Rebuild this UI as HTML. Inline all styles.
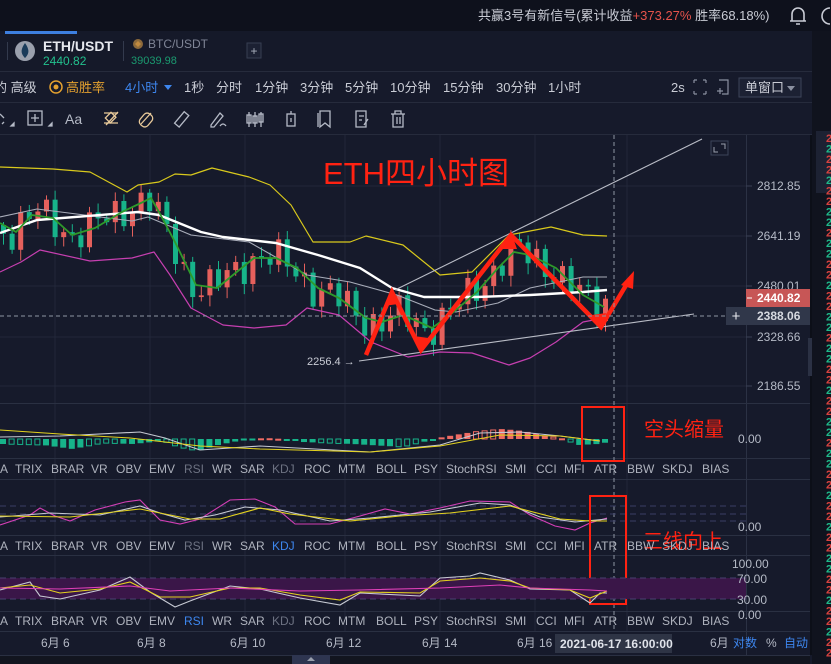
<!DOCTYPE html>
<html><head><meta charset="utf-8">
<style>
html,body{margin:0;padding:0;background:#161a2b;}
body{width:831px;height:664px;overflow:hidden;position:relative;font-family:"Liberation Sans","Noto Sans CJK SC",sans-serif;}
svg{position:absolute;left:0;top:0;}
text{font-family:"Liberation Sans","Noto Sans CJK SC",sans-serif;}
</style></head><body>
<svg id="s" width="831" height="664" viewBox="0 0 831 664" xmlns="http://www.w3.org/2000/svg">
<rect x="0" y="0" width="831" height="664" fill="#161a2b"/>
<rect x="0" y="0" width="831" height="31" fill="#0e111c"/>
<rect x="0" y="31" width="812" height="40" fill="#151929"/>
<rect x="0" y="71" width="812" height="1" fill="#262b3c"/>
<rect x="0" y="102" width="812" height="1" fill="#262b3c"/>
<rect x="0" y="134" width="812" height="1" fill="#262b3c"/>
<rect x="5" y="31" width="72" height="3" fill="#3d7fe0"/>
<rect x="812" y="31" width="19" height="633" fill="#10131e"/>
<rect x="816" y="131" width="15" height="62" fill="#1d2233"/>
<text x="478" y="20" font-size="13" fill="#c9ccd5">共赢3号有新信号(累计收益<tspan fill="#e5534b">+373.27%</tspan> 胜率68.18%)</text>
<g fill="none" stroke="#c9ccd5" stroke-width="1.6"><path d="M792 21 V14 a6 6 0 0 1 12 0 V21 Z M790 21 H806 M796 24 H800"/><path d="M830 8 a8 8 0 0 0 0 16"/></g>
<rect x="7" y="42" width="1" height="18" fill="#333a4d"/>
<circle cx="25" cy="51" r="10" fill="#9aa0ad"/><path d="M25 43 C21 49 20 53 25 58 C30 53 29 49 25 43Z" fill="#1a3b5a"/>
<text x="43" y="51" font-size="14" font-weight="bold" fill="#e6e8ee">ETH/USDT</text>
<text x="43" y="65" font-size="12" fill="#22c08d">2440.82</text>
<rect x="123" y="41" width="1" height="20" fill="#333a4d"/>
<circle cx="138" cy="44" r="5" fill="#8d6a3b"/><path d="M138 41 L141 44 L138 47 L135 44Z" fill="#c08a40"/>
<text x="148" y="48" font-size="12" fill="#7f8596">BTC/USDT</text>
<text x="131" y="64" font-size="11" fill="#1b9a70">39039.98</text>
<rect x="247" y="43" width="14" height="15" fill="#1c2133" stroke="#373e52"/>
<text x="254" y="55" font-size="12" fill="#aab0bd" text-anchor="middle">+</text>
<g font-size="13" fill="#c9ccd5">
<text x="-6" y="92">的 高级</text>
<circle cx="56" cy="87" r="6" fill="none" stroke="#e3a02f" stroke-width="1.5"/><circle cx="56" cy="87" r="2.5" fill="#e3a02f"/>
<text x="66" y="92" fill="#e3a02f">高胜率</text>
<text x="125" y="92" fill="#3d86ee">4小时</text>
<path d="M164 85 L172 85 L168 90Z" fill="#3d86ee"/>
<text x="184" y="92">1秒</text><text x="216" y="92">分时</text><text x="255" y="92">1分钟</text>
<text x="300" y="92">3分钟</text><text x="345" y="92">5分钟</text><text x="390" y="92">10分钟</text>
<text x="443" y="92">15分钟</text><text x="496" y="92">30分钟</text><text x="548" y="92">1小时</text>
<text x="671" y="92">2s</text>
</g>
<g fill="none" stroke="#8a90a0" stroke-width="1.2"><path d="M694 80h3M694 80v3M706 80h-3M706 80v3M694 94h3M694 94v-3M706 94h-3M706 94v-3"/><path d="M719 80h9v14h-6M720 88v6M717 91h6"/></g>
<rect x="739" y="78" width="62" height="19" fill="#1c2133" stroke="#3c4459"/>
<text x="745" y="92" font-size="13" fill="#c9ccd5">单窗口</text><path d="M787 86 L795 86 L791 91Z" fill="#8a90a0"/>
<g fill="none" stroke="#b5bac6" stroke-width="1.3">
<path d="M0 114 l4 4 M2 124 l2 -2"/>
<rect x="28" y="111" width="14" height="14"/><path d="M35 114v8M31 118h8"/><path d="M49 126 l3 -3 v3z" fill="#b5bac6"/>
<path d="M11 126 l3 -3 v3z" fill="#b5bac6"/>
<path d="M104 113l14 0 M104 123l14 0" stroke="#e8c99a"/><path d="M106 125 L118 112" stroke="#e8c99a"/><rect x="107" y="114" width="8" height="7" stroke="#e8c99a" transform="rotate(-45 111 118)"/>
<rect x="141" y="113" width="10" height="14" rx="4" transform="rotate(40 146 120)" stroke="#e8c99a"/><path d="M141 124 L151 113" stroke="#e8c99a"/>
<rect x="179" y="112" width="6" height="15" transform="rotate(40 182 119)"/>
<path d="M211 125 L220 113 L223 116 L214 127 L211 127Z M220 126 q3 -4 6 0"/>
<path d="M249 112v15M255 112v15M261 112v15"/><rect x="247" y="115" width="4" height="8"/><rect x="253" y="116" width="4" height="7"/><rect x="259" y="114" width="4" height="8"/>
<rect x="287" y="114" width="8" height="12"/><path d="M291 111v3M291 118v4"/>
<path d="M320 111h10v16l-5-4-5 4z"/><path d="M318 113v14"/>
<path d="M356 111h10v16h-10zM359 116h5M359 120h3M364 125l4-6"/>
<path d="M391 114h14M395 114v-3h6v3M393 114v13h10v-13M397 117v7M400 117v7"/>
</g>
<text x="65" y="124" font-size="14" fill="#b5bac6">Aa</text>
<g stroke="#22273a" stroke-width="1">
<path d="M55 135V632M150 135V632M245 135V632M345 135V632M440 135V632M535 135V632M627 135V632"/>
<path d="M0 186H746M0 236H746M0 286H746M0 337H746M0 386H746"/>
</g>
<rect x="746" y="135" width="1" height="520" fill="#2b3144"/>
<rect x="810" y="135" width="2" height="520" fill="#0c0f18"/>
<g fill="#2a3042"><rect x="0" y="403" width="810" height="1"/><rect x="0" y="458" width="810" height="1"/><rect x="0" y="479" width="810" height="1"/><rect x="0" y="535" width="810" height="1"/><rect x="0" y="555" width="810" height="1"/><rect x="0" y="611" width="810" height="1"/><rect x="0" y="631" width="810" height="1"/><rect x="0" y="655" width="810" height="1"/></g>
<g id="candles"></g>
<g fill="none" stroke-linejoin="round">
<polyline stroke="#d9c91c" stroke-width="1.2" points="0,167 53,169 90,172 127,192 138,185 159,182 175,174 191,175 212,168 249,177 270,185 291,205 313,242 350,242 366,236 403,245 440,275 472,272 509,235 551,227 583,235 607,236"/>
<polyline stroke="#c63fb0" stroke-width="1.2" points="0,272 21,262 40,250 90,261 132,258 154,252 170,275 191,308 223,325 254,328 286,325 307,308 339,315 371,342 408,357 440,352 472,353 509,365 530,358 556,342 583,322 604,318"/>
<polyline stroke="#a9adba" stroke-width="1.1" points="0,217 37,209 132,221 148,217 191,235 249,242 307,275 350,282 397,295 435,310 456,312 498,303 530,288 583,277 607,277"/>
<polyline stroke="#ffffff" stroke-width="2.4" points="0,233 37,220 138,212 159,215 201,232 223,237 276,243 318,255 360,268 392,288 424,297 477,297 530,295 583,292 607,290"/>
<polyline stroke="#2e9a2a" stroke-width="1.8" points="0,223 16,232 32,215 53,218 72,235 95,228 122,212 143,202 151,198 159,212 175,242 196,285 217,288 233,275 254,258 276,258 297,268 318,288 339,298 366,318 382,322 403,315 419,322 432,328 450,315 477,292 498,268 514,252 530,255 556,268 583,295 604,307"/>
<path d="M395 290 L702 139" stroke="#b9bcc6" stroke-width="1.1"/>
<path d="M359 361 L694 314" stroke="#b9bcc6" stroke-width="1.1"/>
</g>
<g fill="none" stroke="#ff2212" stroke-width="4.5" stroke-linejoin="miter">
<polyline points="366,355 392,292 421,350 511,235 601,327 628,282"/>
</g>
<g fill="#ff2212"><path d="M392 289 L384 306 L398 304Z"/><path d="M421 352 L414 336 L428 338Z"/><path d="M511 232 L502 249 L517 249Z"/><path d="M601 329 L592 315 L606 313Z"/><path d="M634 271 L621 285 L633 289Z"/></g>
<text x="307" y="365" font-size="11" fill="#c9ccd5">2256.4 →</text>
<text x="323" y="184" font-size="31" fill="#ff2212">ETH四小时图</text>
<rect x="711" y="141" width="17" height="14" fill="none" stroke="#3c4459"/><path d="M714 147v5h4M725 149v-5h-4" fill="none" stroke="#9aa0ad"/>
<path d="M614 135V632" stroke="#8f95a3" stroke-dasharray="4,3"/>
<path d="M0 316H726" stroke="#8f95a3" stroke-dasharray="4,3"/>
<g font-size="12" fill="#b5bac6">
<text x="757" y="190">2812.85</text><text x="757" y="240">2641.19</text><text x="757" y="290">2480.01</text>
<text x="757" y="341">2328.66</text><text x="757" y="390">2186.55</text>
</g>
<g stroke="#3a4055"><path d="M746 186h6M746 236h6M746 286h6M746 337h6M746 386h6"/></g>
<rect x="746" y="289" width="64" height="18" fill="#c75656"/>
<text x="757" y="302" font-size="12" font-weight="bold" fill="#fff">2440.82</text><path d="M747 298h5" stroke="#fff"/>
<rect x="726" y="307" width="84" height="18" fill="#30374a"/>
<text x="757" y="320" font-size="12" font-weight="bold" fill="#d6d9e0">2388.06</text>
<text x="736" y="321" font-size="15" fill="#e6e8ee" text-anchor="middle">+</text>
<rect x="808" y="338" width="4" height="38" fill="#2b3144"/>
<g id="macd"></g>
<g fill="none" stroke-width="1.1">
<polyline stroke="#c7cad3" points="0,437 60,436 140,432 165,438 200,450 260,446 370,452 440,445 480,433 520,432 560,436 600,441"/>
<polyline stroke="#e3d21e" points="0,430 60,434 130,438 200,446 260,449 370,452 440,446 500,435 560,436 600,441"/>
</g>
<text x="738" y="443" font-size="12" fill="#b5bac6">0.00</text>
<rect x="582" y="407" width="42" height="54" fill="none" stroke="#ff2212" stroke-width="2"/>
<text x="644" y="436" font-size="20" fill="#ff2212">空头缩量</text>
<g stroke="#3a3f66" stroke-dasharray="6,4"><path d="M0 506H746M0 514H746M0 521H746"/></g>
<g fill="none" stroke-width="1.1">
<polyline stroke="#d43fb6" points="0,525 30,515 40,508 55,516 70,521 95,510 125,502 140,500 160,520 180,524 200,519 230,500 255,499 275,507 295,524 330,524 360,516 385,509 410,514 440,508 470,501 510,502 530,515 555,526 575,530 590,523 607,518"/>
<polyline stroke="#c7cad3" points="0,517 50,513 100,515 140,506 160,513 185,520 215,515 245,507 280,510 330,521 370,518 430,512 480,503 510,505 540,517 575,522 607,519"/>
<polyline stroke="#e3d21e" points="0,516 70,517 140,509 190,519 220,519 260,508 290,514 350,521 400,516 450,513 510,506 560,519 590,521 607,521"/>
</g>
<text x="738" y="531" font-size="12" fill="#b5bac6">0.00</text>
<rect x="590" y="496" width="36" height="108" fill="none" stroke="#ff2212" stroke-width="2"/>
<text x="643" y="548" font-size="20" fill="#ff2212">三线向上</text>
<rect x="0" y="578" width="746" height="21" fill="#3a1648"/>
<g stroke="#4a4070" stroke-dasharray="6,4"><path d="M0 578H746M0 599H746"/></g>
<g fill="none" stroke-width="1.1">
<polyline stroke="#c7cad3" points="0,590 30,582 40,596 60,599 100,590 130,577 150,592 165,601 175,607 190,601 230,586 260,589 300,598 340,605 360,593 420,596 440,578 470,576 480,573 510,580 530,589 570,590 590,603 600,593 607,593"/>
<polyline stroke="#e3d21e" points="0,588 30,585 60,593 100,589 130,582 160,597 190,597 230,588 260,588 300,595 340,600 360,592 420,593 440,581 480,578 510,581 530,588 570,590 590,598 607,591"/>
<polyline stroke="#e040b8" points="0,588 60,589 130,586 170,591 230,588 300,591 360,590 440,588 500,585 530,588 590,590 607,591"/>
</g>
<g font-size="12" fill="#b5bac6"><text x="732" y="568">100.00</text><text x="737" y="583">70.00</text><text x="737" y="604">30.00</text><text x="738" y="619">0.00</text></g>
<g font-size="12" fill="#aeb2bd" id="tabs"></g>
<g font-size="12" fill="#b5bac6">
<text x="41" y="647">6月 6</text><text x="137" y="647">6月 8</text><text x="230" y="647">6月 10</text>
<text x="326" y="647">6月 12</text><text x="422" y="647">6月 14</text><text x="517" y="647">6月 16</text>
<text x="710" y="647">6月</text><text x="733" y="647" fill="#3d86ee">对数</text><text x="766" y="647">%</text><text x="784" y="647" fill="#3d86ee">自动</text>
</g>
<rect x="555" y="634" width="117" height="19" fill="#2e3445"/>
<text x="560" y="648" font-size="12" font-weight="bold" fill="#e0e3ea">2021-06-17 16:00:00</text>
<rect x="0" y="656" width="810" height="8" fill="#12151f"/>
<rect x="292" y="655" width="38" height="9" fill="#2e3550"/><path d="M307 661 L311 657 L315 661Z" fill="#9aa0ad"/>
<g id="strip" font-size="11" font-weight="bold"></g>
</svg>
<script>
(function(){
var NS="http://www.w3.org/2000/svg";
function el(t,a,p){var e=document.createElementNS(NS,t);for(var k in a)e.setAttribute(k,a[k]);p.appendChild(e);return e;}
var ma=[[0,223],[16,232],[32,215],[53,218],[72,235],[95,228],[122,212],[143,202],[151,198],[159,212],[175,242],[196,285],[217,288],[233,275],[254,258],[276,258],[297,268],[318,288],[339,298],[366,318],[382,322],[403,315],[419,322],[432,328],[450,315],[477,292],[498,268],[514,252],[530,255],[556,268],[583,295],[604,307],[610,300]];
function ip(pts,x){for(var i=0;i<pts.length-1;i++){if(x>=pts[i][0]&&x<=pts[i+1][0]){var t=(x-pts[i][0])/(pts[i+1][0]-pts[i][0]);return pts[i][1]+t*(pts[i+1][1]-pts[i][1]);}}return pts[pts.length-1][1];}
var g=document.getElementById("candles");var prev=225;
for(var i=0;i<80;i++){var x=1+i*8.6;if(x>604)break;
var c=ip(ma,x+6)+14*Math.sin(i*2.3)+8*Math.sin(i*0.9+1);var o=prev;prev=c;
var up=c<o;var col=up?"#e5605c":"#17b38a";var top=Math.min(o,c),bot=Math.max(o,c);if(bot-top<1.5)bot=top+1.5;
var wt=top-3-6*Math.abs(Math.sin(i*1.3)),wb=bot+3+8*Math.abs(Math.cos(i*1.7));
el("line",{x1:x+2.5,x2:x+2.5,y1:wt,y2:wb,stroke:col,"stroke-width":1},g);
el("rect",{x:x,y:top,width:5,height:bot-top,fill:col},g);}
var mg=document.getElementById("macd");
var hp=[[0,-5],[40,-6],[70,-10],[100,-4],[130,-5],[160,-2],[175,-8],[195,-12],[215,-6],[240,-1],[270,1],[300,-3],[350,-5],[400,-8],[420,-3],[440,2],[470,7],[500,10],[520,8],[545,3],[560,0],[575,-6],[595,-5],[606,-3]];
for(var j=0;j<80;j++){var x=j*8.6;if(x>606)break;var h=ip(hp,x);var col=h>0?"#ef6b63":"#17b38a";
var hollow=(Math.sin(j*0.7)>0.3);
if(hollow)el("rect",{x:x+0.5,y:h>0?439-h:439,width:5,height:Math.max(1,Math.abs(h)),fill:"none",stroke:col,"stroke-width":1},mg);
else el("rect",{x:x,y:h>0?439-h:439,width:6,height:Math.max(2,Math.abs(h)),fill:col},mg);}
var tb=document.getElementById("tabs");
var names=[["A",0],["TRIX",15],["BRAR",51],["VR",91],["OBV",116],["EMV",149],["RSI",184],["WR",212],["SAR",240],["KDJ",272],["ROC",304],["MTM",338],["BOLL",376],["PSY",414],["StochRSI",446],["SMI",505],["CCI",536],["MFI",564],["ATR",594],["BBW",627],["SKDJ",662],["BIAS",702]];
[473,550,625].forEach(function(y,r){names.forEach(function(n){var f="#aeb2bd";if(n[0]=="RSI")f=r==2?"#3d86ee":"#6d7282";if(n[0]=="KDJ")f=r==1?"#3d86ee":"#6d7282";var t=el("text",{x:n[1],y:y,fill:f},tb);t.textContent=n[0];});});
var st=document.getElementById("strip");
for(var k=0;k<60;k++){var y=142+k*10.5;if(y>664)break;var t=el("text",{x:826,y:y,fill:(Math.sin(k*1.9)>0.1)?"#1fb98a":"#d9423f"},st);t.textContent="2";}
})();
</script>
</body></html>
